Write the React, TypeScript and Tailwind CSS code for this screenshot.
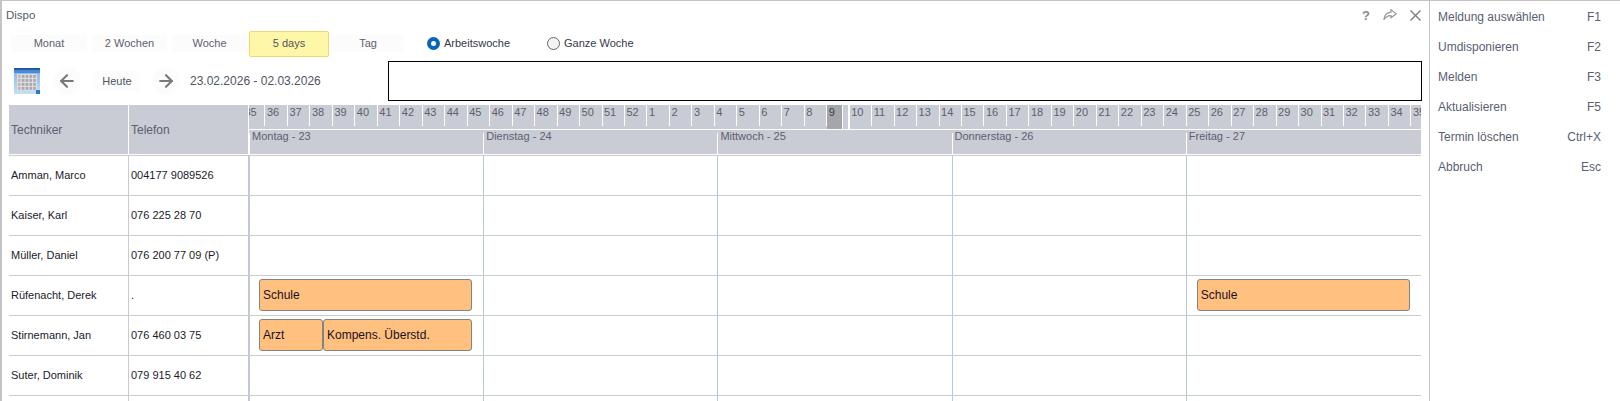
import React from 'react';
import { ArrowLeft, ArrowRight } from 'lucide-react';

const WEEKS = [
  ...Array.from({ length: 18 }, (_, i) => i + 35),
  ...Array.from({ length: 35 }, (_, i) => i + 1),
];

const DAYS = ['Montag - 23', 'Dienstag - 24', 'Mittwoch - 25', 'Donnerstag - 26', 'Freitag - 27'];

type Bar = { label: string; width: string };

const TECHS: { name: string; phone: string; bars: Record<number, Bar[]> }[] = [
  { name: 'Amman, Marco', phone: '004177 9089526', bars: {} },
  { name: 'Kaiser, Karl', phone: '076 225 28 70', bars: {} },
  { name: 'Müller, Daniel', phone: '076 200 77 09 (P)', bars: {} },
  {
    name: 'Rüfenacht, Derek',
    phone: '.',
    bars: {
      0: [{ label: 'Schule', width: 'w-full' }],
      4: [{ label: 'Schule', width: 'w-full' }],
    },
  },
  {
    name: 'Stirnemann, Jan',
    phone: '076 460 03 75',
    bars: {
      0: [
        { label: 'Arzt', width: 'w-[64px]' },
        { label: 'Kompens. Überstd.', width: 'flex-1' },
      ],
    },
  },
  { name: 'Suter, Dominik', phone: '079 915 40 62', bars: {} },
  { name: '', phone: '', bars: {} },
];

const MENU = [
  ['Meldung auswählen', 'F1'],
  ['Umdisponieren', 'F2'],
  ['Melden', 'F3'],
  ['Aktualisieren', 'F5'],
  ['Termin löschen', 'Ctrl+X'],
  ['Abbruch', 'Esc'],
];

const CalendarIcon = () => (
  <svg width="26" height="26" viewBox="0 0 26 26">
    <defs>
      <linearGradient id="calBody" x1="0" y1="0" x2="0" y2="1">
        <stop offset="0" stopColor="#7fb4e8" />
        <stop offset="1" stopColor="#c4e0f6" />
      </linearGradient>
    </defs>
    <rect x="0" y="0" width="26" height="26" fill="url(#calBody)" />
    <rect x="0" y="0" width="26" height="2" fill="#1f5aa8" />
    <rect x="0" y="2" width="26" height="3" fill="#4a8cd4" />
    <rect x="3" y="6" width="20" height="17" fill="#dcdcde" />
    {[0, 1, 2, 3].map(row =>
      [0, 1, 2, 3, 4].map(col => (
        <rect
          key={`${row}-${col}`}
          x={4 + col * 3.8}
          y={7 + row * 4}
          width="2.6"
          height="2.8"
          fill={col === 0 ? '#d2b0b0' : '#a9a9b0'}
        />
      )),
    )}
    <rect x="22" y="22" width="4" height="4" fill="#2a78d0" />
  </svg>
);

const ShareIcon = () => (
  <svg width="14" height="12" viewBox="0 0 14 12" fill="none" stroke="#9a9a9a" strokeWidth="1.2">
    <path d="M8 0.8 L13.2 4.8 L8 8.8 V6.6 C5 6.4 2.6 7.8 0.8 10.8 C1.2 6.6 3.8 3.6 8 3.2 Z" />
  </svg>
);

const CloseIcon = () => (
  <svg width="11" height="11" viewBox="0 0 11 11" stroke="#7c7c7c" strokeWidth="1.4">
    <path d="M0.5 0.5 L10.5 10.5 M10.5 0.5 L0.5 10.5" />
  </svg>
);

const Tab = ({ label, active, className }: { label: string; active?: boolean; className: string }) => (
  <div
    className={`flex items-center justify-center text-[11px] shrink-0 ${className} ${
      active
        ? 'h-[26px] bg-[#fff7a8] border border-[#f2d873] rounded-[2px] text-[#555]'
        : 'h-[17px] bg-[#fcfcfc] text-[#5e6270]'
    }`}
  >
    {label}
  </div>
);

const Radio = ({ label, checked, className }: { label: string; checked?: boolean; className: string }) => (
  <div className={`flex items-center gap-[4px] text-[11px] text-[#333a48] ${className}`}>
    {checked ? (
      <span className="w-[13px] h-[13px] rounded-full bg-[#0a64b8] flex items-center justify-center">
        <span className="w-[5px] h-[5px] rounded-full bg-white" />
      </span>
    ) : (
      <span className="w-[13px] h-[13px] rounded-full bg-[#f4f4f4] border border-[#666]" />
    )}
    {label}
  </div>
);

const NavArrow = ({ children, className }: { children: React.ReactNode; className: string }) => (
  <span className={`w-[28px] h-[28px] rounded-full bg-[#fcfcfc] flex items-center justify-center text-[#7a7a7a] ${className}`}>
    {children}
  </span>
);

export default function App() {
  return (
    <div className="w-[1620px] h-[401px] overflow-hidden bg-white flex border-t border-t-[#c4c4c4] border-l-2 border-l-[#c4c4c4] font-['Liberation_Sans',sans-serif]">
      <main className="w-[1427px] shrink-0 flex flex-col">
        <header className="h-[29px] shrink-0 flex items-start justify-between pt-[6px] pl-[4px] pr-[8px]">
          <span className="text-[11.5px] leading-[16px] text-[#555b6a]">Dispo</span>
          <div className="flex items-center gap-[13px] h-[16px] text-[#8a8a8a]">
            <span className="text-[13px] font-bold leading-none">?</span>
            <ShareIcon />
            <CloseIcon />
          </div>
        </header>

        <div className="h-[27px] shrink-0 flex items-center pl-[9px]">
          <Tab label="Monat" className="w-[76px]" />
          <Tab label="2 Wochen" className="w-[75px] ml-[5px]" />
          <Tab label="Woche" className="w-[75px] ml-[5px]" />
          <Tab label="5 days" active className="w-[80px] ml-[2px]" />
          <Tab label="Tag" className="w-[72px] ml-[3px]" />
          <Radio label="Arbeitswoche" checked className="ml-[23px]" />
          <Radio label="Ganze Woche" className="ml-[37px]" />
        </div>

        <div className="h-[40px] mt-[4px] shrink-0 flex items-center pl-[12px]">
          <CalendarIcon />
          <NavArrow className="ml-[13px]">
            <ArrowLeft size={20} strokeWidth={2.6} />
          </NavArrow>
          <span className="ml-[13px] w-[46px] h-[20px] bg-[#fcfcfc] flex items-center justify-center text-[11px] text-[#4f5462]">Heute</span>
          <NavArrow className="ml-[12px]">
            <ArrowRight size={20} strokeWidth={2.6} />
          </NavArrow>
          <span className="ml-[10px] w-[198px] text-[12px] text-[#4f5462]">23.02.2026 - 02.03.2026</span>
          <div className="w-[1034px] h-[40px] border-[1.5px] border-black" />
        </div>

        <div className="mt-[4px] ml-[7px] w-[1412px] flex flex-col">
          <div className="h-[51px] shrink-0 flex items-start bg-white border-b border-[#c9ccd6] text-[#5c6070]">
            <div className="w-[119px] h-[49px] shrink-0 bg-[#c9ccd4] flex items-center pl-[2px] text-[12px]">Techniker</div>
            <div className="w-[119px] h-[49px] ml-[1px] shrink-0 bg-[#c9ccd4] flex items-center pl-[2px] text-[12px]">Telefon</div>
            <div className="flex-1 ml-[1px] min-w-0 flex flex-col">
              <div className="h-[24px] bg-[#c9ccd4] flex overflow-hidden text-[11px]">
                {WEEKS.map((week, index) => (
                  <div
                    key={index}
                    className={`w-[22.47px] shrink-0 pl-[1.5px] pt-[1px] leading-[12px] ${index === 0 ? 'ml-[-6px]' : ''} ${
                      week === 9
                        ? 'h-[24px] text-[#3c3f48] bg-[linear-gradient(to_right,#a4a6aa_0,#a4a6aa_15.5px,#ffffff_15.5px,#ffffff_16.5px,#c9ccd4_16.5px,#c9ccd4_21.47px,#ffffff_21.47px)]'
                        : 'h-[21px] border-r border-r-white'
                    }`}
                  >
                    {week}
                  </div>
                ))}
              </div>
              <div className="h-[24px] mt-[1px] bg-[#c9ccd4] flex text-[11px]">
                {DAYS.map(day => (
                  <div key={day} className="w-[234.2px] shrink-0 flex">
                    <span className="w-[1px] h-[21px] mt-[3px] bg-white" />
                    <span className="pl-[2px] leading-[13px]">{day}</span>
                  </div>
                ))}
              </div>
            </div>
          </div>

          {TECHS.map(tech => (
            <div key={tech.name || 'empty'} className="h-[40px] shrink-0 flex border-b border-[#c9ccd6] text-[11px] text-[#1a1a2a]">
              <div className="w-[120px] shrink-0 border-r border-[#c9ccd6] flex items-center pl-[2px]">{tech.name}</div>
              <div className="w-[121px] shrink-0 border-r-2 border-[#c2c8d8] flex items-center pl-[2px]">{tech.phone}</div>
              <div className="flex-1 min-w-0 flex">
                {DAYS.map((day, dayIndex) => (
                  <div
                    key={day}
                    className={`w-[234.2px] shrink-0 pr-[11px] py-[3px] flex ${
                      dayIndex < 4 ? 'pl-[9px] border-r border-[#b8c6de]' : 'pl-[10px]'
                    }`}
                  >
                    {(tech.bars[dayIndex] ?? []).map(bar => (
                      <div
                        key={bar.label}
                        className={`${bar.width} h-[32px] bg-[#ffc080] border border-[#85837f] rounded-[3px] flex items-center pl-[3px] text-[12px] text-[#1a1020]`}
                      >
                        {bar.label}
                      </div>
                    ))}
                  </div>
                ))}
              </div>
            </div>
          ))}
        </div>
      </main>

      <aside className="flex-1 border-l border-[#c4c4c4] pt-[1px]">
        {MENU.map(([label, key]) => (
          <div key={label} className="h-[30px] flex items-center justify-between pl-[8px] pr-[19px] text-[12px] text-[#5a6072]">
            <span>{label}</span>
            <span>{key}</span>
          </div>
        ))}
      </aside>
    </div>
  );
}
